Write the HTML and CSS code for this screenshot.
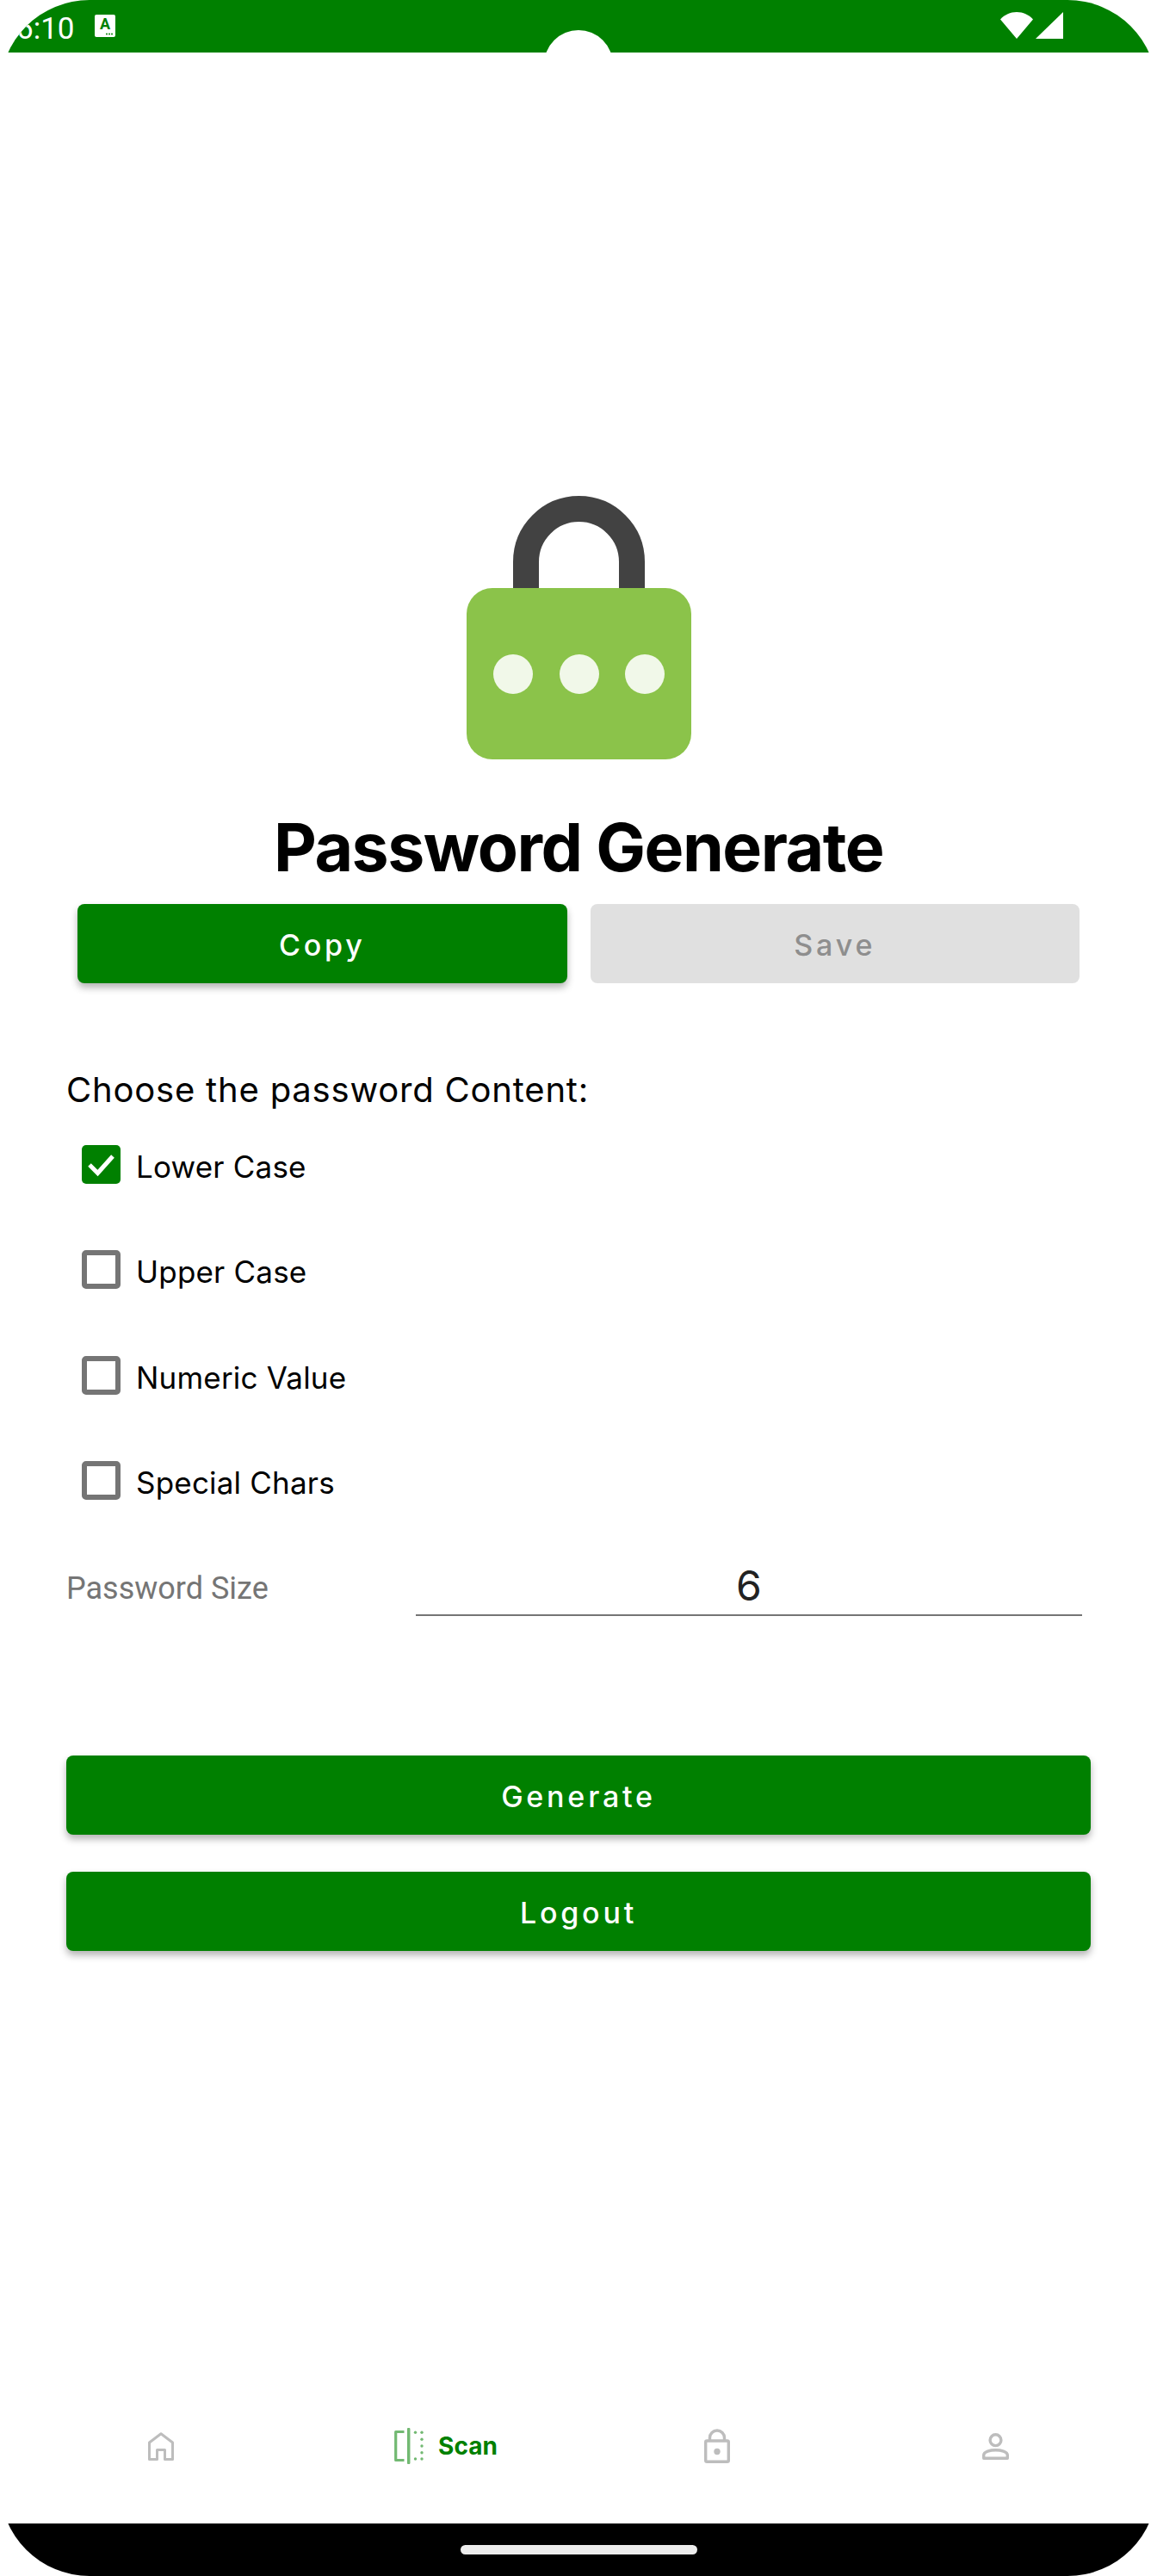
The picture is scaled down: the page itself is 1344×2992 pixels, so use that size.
FILE: index.html
```html
<!DOCTYPE html>
<html lang="en">
<head>
    <meta charset="UTF-8">
    <meta name="viewport" content="width=device-width, initial-scale=1.0">
    <title>Password Generate</title>
    <link rel="stylesheet" href="styles.css">
</head>
<body>
    <div class="screen">
        <div class="status-bar">
            <div class="status-left">
                <span class="clock">6:10</span>
                <svg class="a-icon" width="24" height="26" viewBox="0 0 24 26">
                    <rect width="24" height="26" rx="2" fill="#fff"/>
                    <text class="a-letter" x="12" y="17" text-anchor="middle">A</text>
                    <circle cx="14" cy="22.5" r="1" fill="#008000"/>
                    <circle cx="17" cy="22.5" r="1" fill="#008000"/>
                    <circle cx="20" cy="22.5" r="1" fill="#008000"/>
                </svg>
            </div>
            <div class="camera"></div>
            <div class="status-right">
                <svg width="38" height="31" viewBox="0 0 38 31">
                    <path d="M19 31L0 8.5C5 3 11.500 0 19 0s14 3 19 8.500z" fill="#fff"/>
                </svg>
                <svg width="32" height="31" viewBox="0 0 32 31">
                    <path d="M32 0V31H0z" fill="#fff"/>
                </svg>
            </div>
        </div>

        <div class="content">
            <svg class="logo" width="261" height="306" viewBox="0 0 261 306">
                <path d="M69 120V76.500a61.500 61.500 0 0 1 123 0V120" fill="none" stroke="#424242" stroke-width="30"/>
                <rect y="107" width="261" height="199" rx="30" fill="#8bc34a"/>
                <circle cx="54" cy="207" r="23" fill="#f1f8e9"/>
                <circle cx="131" cy="207" r="23" fill="#f1f8e9"/>
                <circle cx="207" cy="207" r="23" fill="#f1f8e9"/>
            </svg>

            <h1 class="title">Password Generate</h1>

            <div class="btn-row">
                <button class="btn">Copy</button>
                <button class="btn btn-disabled">Save</button>
            </div>

            <p class="section-label">Choose the password Content:</p>

            <ul class="options">
                <li class="option">
                    <span class="check check-on">
                        <svg width="45" height="45" viewBox="0 0 45 45">
                            <path d="M9 23l9.500 9.500L36 13" fill="none" stroke="#fff" stroke-width="5"/>
                        </svg>
                    </span>
                    Lower Case
                </li>
                <li class="option"><span class="check"></span>Upper Case</li>
                <li class="option"><span class="check"></span>Numeric Value</li>
                <li class="option"><span class="check"></span>Special Chars</li>
            </ul>

            <div class="size-row">
                <label class="size-label">Password Size</label>
                <div class="size-input">6</div>
            </div>

            <div class="actions">
                <button class="btn">Generate</button>
                <button class="btn">Logout</button>
            </div>
        </div>

        <nav class="bottom-nav">
            <div class="tab">
                <svg width="30" height="33" viewBox="0 0 30 33">
                    <path d="M15 1.800L1.500 12V31.500H10.500V20.500H19.500V31.500H28.500V12z" fill="none" stroke="#bdbdbd" stroke-width="3" stroke-linejoin="round"/>
                </svg>
            </div>
            <div class="tab tab-active">
                <svg class="scan-icon" width="34" height="42" viewBox="0 0 34 42">
                    <path d="M11.500 4.500H1.700V37.500H11.500" fill="none" stroke="#008000" stroke-width="3.200" stroke-linejoin="round"/>
                    <path d="M16.700 1.500V40.500" fill="none" stroke="#008000" stroke-width="3.500" stroke-linecap="round"/>
                    <circle cx="24.500" cy="5.300" r="1.700" fill="#008000"/>
                    <circle cx="32" cy="5.300" r="1.700" fill="#008000"/>
                    <circle cx="32" cy="13.300" r="1.700" fill="#008000"/>
                    <circle cx="32" cy="21" r="1.700" fill="#008000"/>
                    <circle cx="32" cy="28.700" r="1.700" fill="#008000"/>
                    <circle cx="32" cy="36" r="1.700" fill="#008000"/>
                    <circle cx="24.500" cy="36" r="1.700" fill="#008000"/>
                </svg>
                <span class="tab-label">Scan</span>
            </div>
            <div class="tab">
                <svg width="30" height="40" viewBox="0 0 30 40">
                    <rect x="1.700" y="14" width="26.600" height="24.300" rx="1.500" fill="none" stroke="#bdbdbd" stroke-width="3.400"/>
                    <path d="M6.500 14V10.500a8.500 8.500 0 0 1 17 0V14" fill="none" stroke="#bdbdbd" stroke-width="3.400"/>
                    <circle cx="15" cy="26.500" r="3.700" fill="#bdbdbd"/>
                </svg>
            </div>
            <div class="tab">
                <svg width="31" height="31" viewBox="0 0 31 31">
                    <circle cx="15.500" cy="8.200" r="6.400" fill="none" stroke="#bdbdbd" stroke-width="3.400"/>
                    <path d="M1.700 25.500C1.700 21.500 9.500 19.700 15.500 19.700S29.300 21.500 29.300 25.500V29.300H1.700z" fill="none" stroke="#bdbdbd" stroke-width="3.400" stroke-linejoin="round"/>
                </svg>
            </div>
        </nav>

        <div class="gesture-bar">
            <div class="gesture-pill"></div>
        </div>
    </div>
</body>
</html>
```

FILE: styles.css
```css
* {
    box-sizing: border-box;
}
body {
    margin: 0;
    background-color: #fff;
    font-family: Inter, "Noto Sans", sans-serif;
}
.screen {
    width: 1344px;
    height: 2992px;
    display: flex;
    flex-direction: column;
    border-radius: 104px;
    overflow: hidden;
    background-color: #fff;
}

/* status bar */
.status-bar {
    position: relative;
    height: 61px;
    flex-shrink: 0;
    display: flex;
    justify-content: space-between;
    background-color: #008000;
    overflow: hidden;
}
.status-left {
    display: flex;
    align-items: flex-start;
    padding: 16px 0 0 19px;
}
.clock {
    width: 91px;
    font-family: Roboto, sans-serif;
    font-size: 35px;
    line-height: 35px;
    color: #fff;
}
.a-icon {
    margin-top: 1px;
}
.a-letter {
    font-family: Roboto, sans-serif;
    font-size: 18px;
    font-weight: 700;
    fill: #008000;
}
.camera {
    position: absolute;
    top: 35px;
    left: 632px;
    width: 80px;
    height: 80px;
    border-radius: 50%;
    background-color: #fff;
}
.status-right {
    display: flex;
    align-items: flex-start;
    gap: 3px;
    padding: 14px 109px 0 0;
}

/* main content */
.content {
    flex: 1;
    display: flex;
    flex-direction: column;
    padding: 515px 77px 0;
}
.logo {
    align-self: center;
    flex-shrink: 0;
}
.title {
    margin: 54px 0 18px;
    font-size: 77px;
    line-height: 96px;
    font-weight: 700;
    letter-spacing: -1.500px;
    text-align: center;
    color: #000;
}
.btn-row {
    display: grid;
    grid-template-columns: 1fr 1fr;
    gap: 27px;
    margin: 0 13px;
}
.btn {
    height: 92px;
    padding-top: 4px;
    border: none;
    border-radius: 8px;
    background-color: #008000;
    color: #fff;
    font-family: Inter, "Noto Sans", sans-serif;
    font-size: 34px;
    font-weight: 500;
    letter-spacing: 3.800px;
    box-shadow: 0 5px 9px rgba(0,0,0,0.3);
}
.btn-disabled {
    background-color: #e0e0e0;
    color: #8e8e8e;
    box-shadow: none;
}
.section-label {
    margin: 96px 0 0;
    font-size: 40px;
    line-height: 56px;
    letter-spacing: 0.800px;
    color: #000;
}
.options {
    list-style-type: none;
    margin: 0;
    padding: 0 0 0 18px;
}
.option {
    height: 122.300px;
    display: flex;
    align-items: center;
    gap: 18px;
    font-size: 35px;
    letter-spacing: 0.200px;
    color: #000;
}
.check {
    width: 45px;
    height: 45px;
    flex-shrink: 0;
    margin-top: -5px;
    border: 6px solid #757575;
    border-radius: 5px;
}
.check-on {
    border: none;
    background-color: #008000;
}
.check svg {
    display: block;
}
.size-row {
    display: flex;
    align-items: flex-end;
    justify-content: space-between;
    height: 94px;
    margin-right: 10px;
}
.size-label {
    font-family: Roboto, sans-serif;
    font-size: 36px;
    line-height: 42px;
    padding-bottom: 11px;
    color: #757575;
}
.size-input {
    width: 774px;
    height: 60px;
    border-bottom: 2px solid #757575;
    font-size: 48px;
    line-height: 50px;
    text-align: center;
    color: #222;
}
.actions {
    display: flex;
    flex-direction: column;
    gap: 43px;
    margin-top: 162px;
}

/* bottom nav */
.bottom-nav {
    display: grid;
    grid-template-columns: 374px 288px 342px 304px;
    height: 100px;
    margin-bottom: 40px;
    flex-shrink: 0;
}
.tab {
    display: flex;
    align-items: center;
    justify-content: center;
    gap: 17px;
}
.scan-icon {
    opacity: 0.55;
}
.tab-label {
    font-size: 28px;
    font-weight: 700;
    color: #008000;
}
.gesture-bar {
    height: 61px;
    flex-shrink: 0;
    padding-top: 25px;
    background-color: #000;
}
.gesture-pill {
    width: 275px;
    height: 11px;
    margin: 0 auto;
    border-radius: 6px;
    background-color: #ececec;
}
```
